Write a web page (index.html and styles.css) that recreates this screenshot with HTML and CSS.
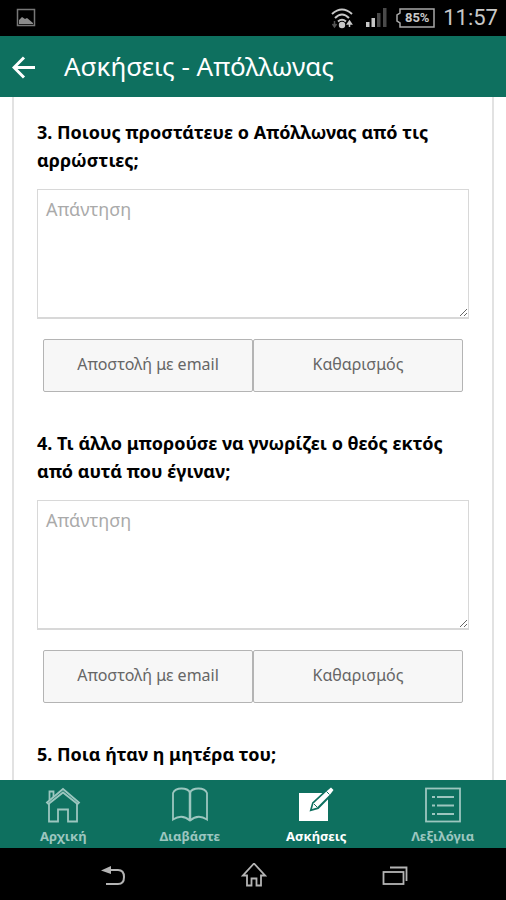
FILE: index.html
```html
<!DOCTYPE html>
<html lang="el">
<head>
  <meta charset="UTF-8" />
  <meta name="viewport" content="width=device-width, initial-scale=1.0"/>
  <title>Ασκήσεις - Απόλλωνας</title>
  <link rel="stylesheet" href="styles.css">
</head>
<body>
  <div class="status">
    <svg class="status-picture" width="20" height="20" viewBox="0 0 20 20">
      <rect x="1.5" y="1.5" width="17" height="16" fill="none" stroke="#777" stroke-width="1.5"/>
      <path d="M3 16v-4l3-3 3 2 2-1 6 5v1z" fill="#8c8c8c"/>
    </svg>
    <svg width="22" height="22" viewBox="0 0 22 22">
      <g fill="none" stroke="#c8c8c8" stroke-width="2">
        <path d="M1 7q10-9 20 0"/>
        <path d="M4 11q7-7 14 0"/>
        <path d="M7 14.500q4-3.500 8 0"/>
      </g>
      <circle cx="11" cy="18" r="3.200" fill="#c8c8c8"/>
      <path d="M3.500 14v6M1.500 17l2 3 2-3" fill="none" stroke="#555" stroke-width="1.500"/>
      <path d="M18.500 20v-6M16.500 17l2-3 2 3z" fill="#c8c8c8" stroke="#c8c8c8" stroke-width="1.500"/>
    </svg>
    <svg class="status-signal" width="22" height="20" viewBox="0 0 22 20">
      <path d="M1 14h3.500v5H1zM6.500 10H10v9H6.500z" fill="#c8c8c8"/>
      <path d="M12 5h3.500v14H12zM18 0h3.500v19H18z" fill="#4a4a4a"/>
    </svg>
    <div class="battery">
      <svg width="40" height="20" viewBox="0 0 40 20">
        <path d="M5 1h34v18H5v-4l-3-2V7l3-2z" fill="none" stroke="#a8a8a8" stroke-width="1.500"/>
      </svg>
      <span class="battery-text">85%</span>
    </div>
    <span class="hora">11:57</span>
  </div>

  <header class="header">
    <button class="back" aria-label="Πίσω">
      <svg width="24" height="24" viewBox="0 0 24 24">
        <path d="M12 2.500L2 12.500l10 10M2.500 12.500h20.500" fill="none" stroke="#fff" stroke-width="3"/>
      </svg>
    </button>
    <h1>Ασκήσεις - Απόλλωνας</h1>
  </header>

  <main class="content">
    <div class="card">
      <form class="question">
        <label for="q3">3. Ποιους προστάτευε ο Απόλλωνας από τις αρρώστιες;</label>
        <textarea id="q3" placeholder="Απάντηση"></textarea>
        <div class="buttons">
          <button type="button">Αποστολή με email</button>
          <button type="reset">Καθαρισμός</button>
        </div>
      </form>

      <form class="question">
        <label for="q4">4. Τι άλλο μπορούσε να γνωρίζει ο θεός εκτός από αυτά που έγιναν;</label>
        <textarea id="q4" placeholder="Απάντηση"></textarea>
        <div class="buttons">
          <button type="button">Αποστολή με email</button>
          <button type="reset">Καθαρισμός</button>
        </div>
      </form>

      <form class="question">
        <label for="q5">5. Ποια ήταν η μητέρα του;</label>
        <textarea id="q5" placeholder="Απάντηση"></textarea>
      </form>
    </div>
  </main>

  <nav class="tabs">
    <a href="#home">
      <svg width="36" height="36" viewBox="0 0 36 36">
        <g fill="none" stroke="currentColor" stroke-width="1.800">
          <path d="M2 15.500L18 2l16 13.500L32.500 17 18 5.500 3.500 17z"/>
          <path d="M4.500 13V4.500h4V10"/>
          <path d="M4 16.500V34.500h9v-12h10v12h9v-18"/>
        </g>
      </svg>
      Αρχική
    </a>
    <a href="#read">
      <svg width="36" height="36" viewBox="0 0 36 36">
        <path d="M18 5.500Q16 1.500 9.500 1.500T1 6v26.500q9-6 17 1Q26 26.500 35 32.500V6q-2-4.500-8.500-4.500T18 5.500z" fill="none" stroke="currentColor" stroke-width="1.800"/>
        <path d="M18 5v29" stroke="currentColor" stroke-width="2.500"/>
      </svg>
      Διαβάστε
    </a>
    <a href="#exercises" class="active">
      <svg width="36" height="36" viewBox="0 0 36 36">
        <path d="M1 6h29v28H1z" fill="currentColor"/>
        <path d="M13 23l2-7L28 4l5-4 3 3-3 5-13 13z" fill="#0e705f" stroke="#0e705f" stroke-width="2"/>
        <path d="M14 22l1.500-5.500L29.500 3.500l3.500-3 2.500 2.500-3 4L19 20.500z" fill="currentColor"/>
        <path d="M28.500 4.500l3 3M16 17l3 3" stroke="#0e705f"/>
      </svg>
      Ασκήσεις
    </a>
    <a href="#glossary">
      <svg width="36" height="36" viewBox="0 0 36 36">
        <rect x="1" y="1.500" width="34" height="33" fill="none" stroke="currentColor" stroke-width="1.800"/>
        <path d="M12 10h17M12 18.500h17M12 27h17M7 10h3M7 18.500h3M7 27h3" stroke="currentColor" stroke-width="2"/>
      </svg>
      Λεξιλόγια
    </a>
  </nav>

  <div class="system">
    <button aria-label="Επιστροφή">
      <svg width="26" height="26" viewBox="0 0 26 26">
        <path d="M10 7h8q6 0 6 7t-6 7H6" fill="none" stroke="#b4b4b4" stroke-width="2"/>
        <path d="M1 7.500L11 3v8z" fill="#b4b4b4"/>
      </svg>
    </button>
    <button aria-label="Αρχική οθόνη">
      <svg width="26" height="26" viewBox="0 0 26 26">
        <path d="M13 0.500L2 12.500h4v10h4.500v-7h5v7H20v-10h4z" fill="none" stroke="#b4b4b4" stroke-width="1.800"/>
      </svg>
    </button>
    <button aria-label="Πρόσφατα">
      <svg width="26" height="26" viewBox="0 0 26 26">
        <rect x="1.500" y="9" width="20" height="12" fill="none" stroke="#b4b4b4" stroke-width="1.800"/>
        <path d="M8 4.500h16.500V18" fill="none" stroke="#b4b4b4" stroke-width="1.800"/>
      </svg>
    </button>
  </div>
</body>
</html>
```

FILE: styles.css
```css
* {
  box-sizing: border-box;
}

body {
  display: flex;
  flex-direction: column;
  height: 100vh;
  margin: 0;
  background-color: #fff;
  font-family: "Noto Sans", "Open Sans", sans-serif;
}

button {
  font-family: inherit;
  cursor: pointer;
}

svg {
  display: block;
}

/* status bar */
.status {
  display: flex;
  align-items: center;
  gap: 8px;
  height: 36px;
  padding: 0 8px 0 16px;
  background-color: #000;
  color: #c8c8c8;
}

.status-picture {
  margin-right: auto;
}

.status-signal {
  margin-left: 4px;
}

.battery {
  position: relative;
}

.battery-text {
  position: absolute;
  inset: 0 0 0 4px;
  font: bold 13px/20px Roboto, sans-serif;
  text-align: center;
}

.hora {
  font: 22px/36px Roboto, sans-serif;
}

/* title bar */
.header {
  display: flex;
  align-items: center;
  gap: 20px;
  padding: 12px;
  background-color: #0e705f;
  color: #fff;
}

.header h1 {
  margin: 0;
  font-size: 26px;
  line-height: 37px;
  font-weight: normal;
}

.back {
  width: 32px;
  padding: 0;
  border: none;
  background: none;
}

/* questions */
.content {
  flex: 1;
  min-height: 0;
  overflow: hidden;
  padding: 0 12px;
}

.card {
  padding: 21px 23px;
  border: 2px solid #e2e2e2;
  border-width: 0 2px;
}

.question {
  margin-bottom: 37px;
}

.question label {
  display: block;
  margin-bottom: 15px;
  color: #000;
  font-size: 18px;
  line-height: 28px;
  font-weight: bold;
}

.question textarea {
  display: block;
  width: 100%;
  height: 130px;
  padding: 6px 8px;
  border: 1px solid #d8d8d8;
  border-bottom: 2px solid #d8d8d8;
  background-color: #fff;
  font-family: inherit;
  font-size: 18px;
  line-height: 26px;
  resize: vertical;
}

.question textarea::placeholder {
  color: #aaa;
}

.buttons {
  display: flex;
  padding: 20px 6px 0;
}

.buttons button {
  flex: 1;
  padding: 11px 0 14px;
  border: 1px solid #b4b4b4;
  border-radius: 2px;
  background-color: #f7f7f7;
  color: #666;
  font-size: 16px;
  line-height: 26px;
}

/* bottom tabs */
.tabs {
  display: flex;
  background-color: #0e705f;
}

.tabs a {
  flex: 1;
  display: flex;
  flex-direction: column;
  align-items: center;
  gap: 4px;
  padding: 7px 0 3px;
  color: #9cc6bf;
  font-size: 13px;
  line-height: 18px;
  font-weight: bold;
  text-decoration: none;
}

.tabs .active {
  color: #fff;
}

/* system keys */
.system {
  display: flex;
  justify-content: space-between;
  padding: 15px 98px 11px 100px;
  background-color: #000;
}

.system button {
  padding: 0;
  border: none;
  background: none;
}
```
